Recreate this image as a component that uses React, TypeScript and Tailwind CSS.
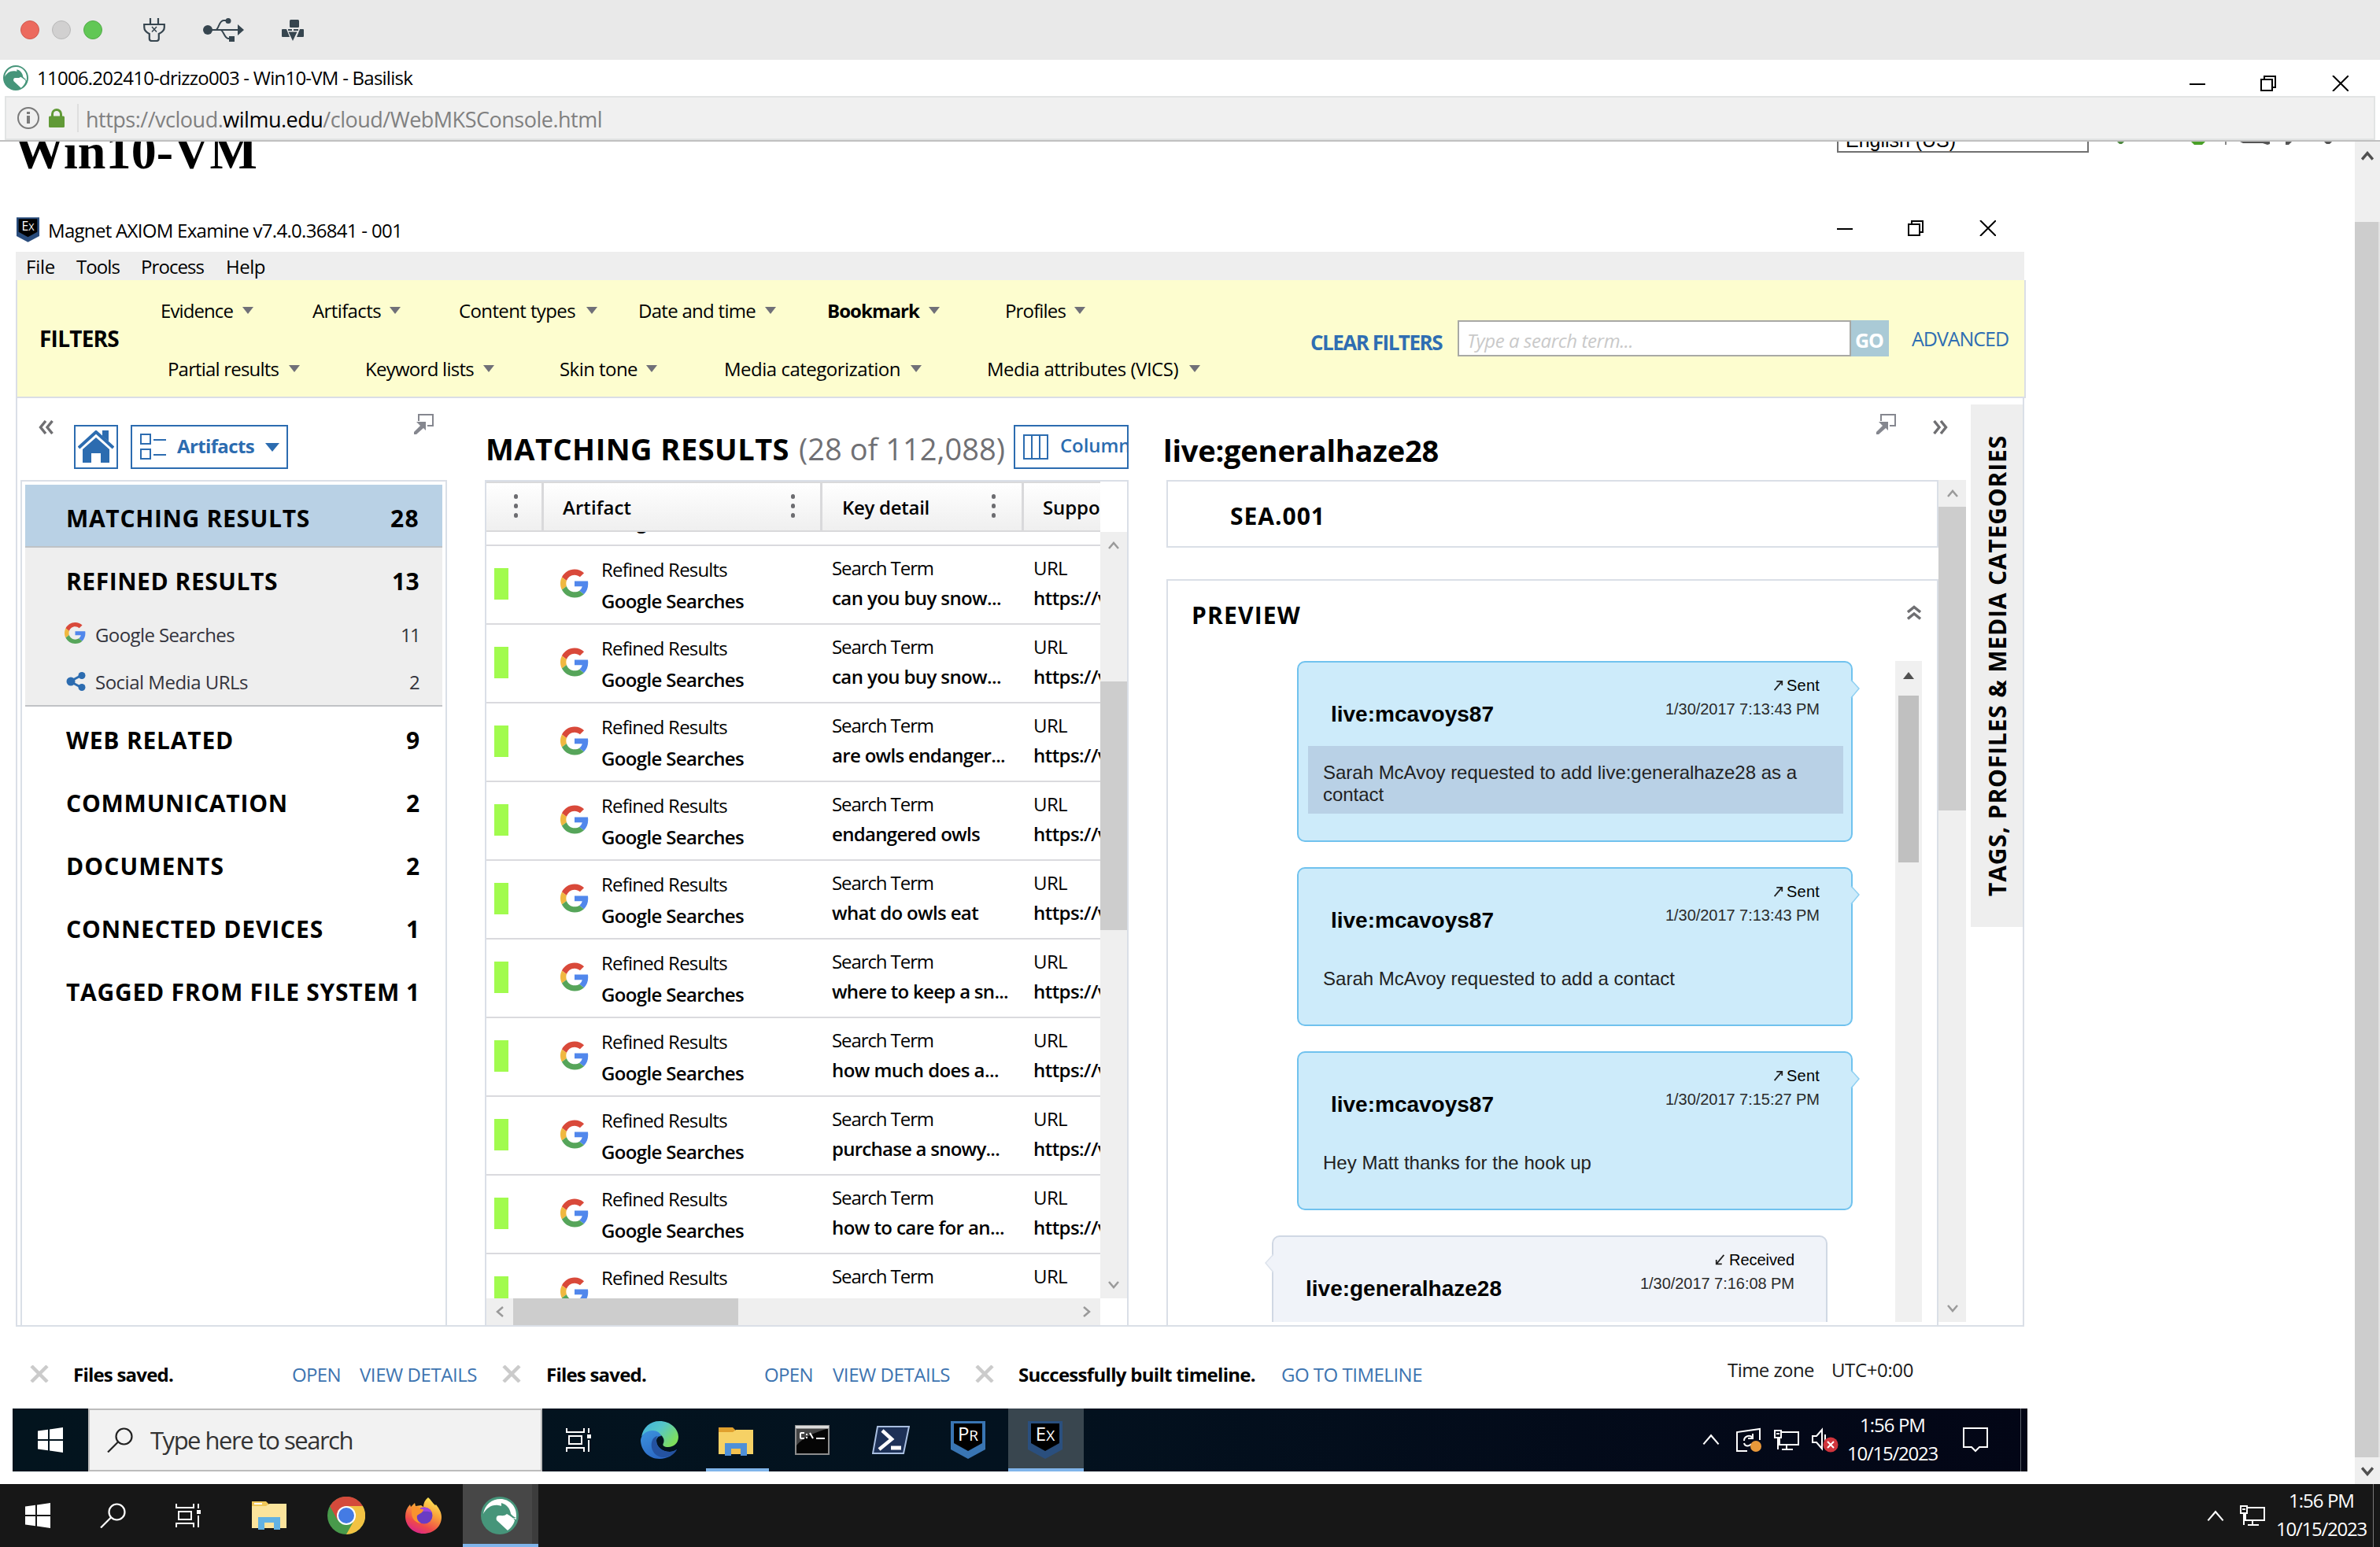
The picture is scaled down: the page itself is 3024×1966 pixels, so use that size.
import { useLayoutEffect, useRef, type ReactNode } from 'react';

type FitProps = { w: number; className?: string; vertical?: boolean; flat?: boolean; children: ReactNode };

/** A single line of text whose tracking is adjusted so that it measures exactly `w` pixels. */
function Fit({ w, className = '', vertical = false, flat = false, children }: FitProps) {
  const ref = useRef<HTMLSpanElement>(null);
  useLayoutEffect(() => {
    const el = ref.current;
    if (!el) return;
    el.style.letterSpacing = '0.01px';
    const box = el.getBoundingClientRect();
    const natural = vertical ? box.height : box.width;
    const count = (el.textContent ?? '').length || 1;
    el.style.letterSpacing = `${(w - natural) / count + 0.01}px`;
  }, [w, vertical]);
  return (
    <span ref={ref} className={`inline-block shrink-0 whitespace-pre ${flat ? '' : '-translate-x-px translate-y-px'} ${className}`}>
      {children}
    </span>
  );
}

/* ---------- icons ---------- */

const GoogleG = ({ className = '' }: { className?: string }) => (
  <svg viewBox="0 0 48 48" className={`shrink-0 ${className}`}>
    <path fill="#d9493a" d="M24 9.5c3.54 0 6.71 1.22 9.21 3.6l6.85-6.85C35.9 2.38 30.47 0 24 0 14.62 0 6.51 5.38 2.56 13.22l7.98 6.19C12.43 13.72 17.74 9.5 24 9.5z" />
    <path fill="#5187ec" d="M46.98 24.55c0-1.57-.15-3.09-.38-4.55H24v9.02h12.94c-.58 2.96-2.26 5.48-4.78 7.18l7.73 6c4.51-4.18 7.09-10.36 7.09-17.65z" />
    <path fill="#f0b840" d="M10.53 28.59c-.48-1.45-.76-2.99-.76-4.59s.27-3.14.76-4.59l-7.98-6.19C.92 16.46 0 20.12 0 24c0 3.88.92 7.54 2.56 10.78l7.97-6.19z" />
    <path fill="#56a55a" d="M24 48c6.48 0 11.93-2.13 15.89-5.81l-7.73-6c-2.15 1.45-4.92 2.3-8.16 2.3-6.26 0-11.57-4.22-13.47-9.91l-7.98 6.19C6.51 42.62 14.62 48 24 48z" />
  </svg>
);

const Basilisk = ({ className = '' }: { className?: string }) => (
  <svg viewBox="0 0 48 48" className={`shrink-0 ${className}`}>
    <circle cx="24" cy="24" r="24" fill="#46957a" />
    <path fill="#fff" d="M3 22C5 10 14 3 25 3c11 0 20 9 20 20v6c-3-1-6-2-8-5-3-7-7-12-15-13C13 10 7 15 3 22z" />
    <path fill="#46957a" d="M26 8c7 2 11 7 12 14 2 2 4 4 7 5-4 1-8-1-10-4-3 0-6-5-9-7z" />
    <path fill="#fff" d="M33 22c4 2 8 5 10 8-1 5-5 10-9 13L20 30c-1-3 0-6 3-6 4 0 7 1 10-2z" />
  </svg>
);

const WinLogo = () => (
  <svg viewBox="0 0 32 32" className="h-8 w-8 shrink-0" fill="#fff">
    <path d="M0 4.5 13 2.7V15H0zM15 2.4 32 0v15H15zM0 17h13v12.3L0 27.5zM15 17h17v15l-17-2.4z" />
  </svg>
);

const SearchIcon = ({ stroke }: { stroke: string }) => (
  <svg viewBox="0 0 33 32" className="h-8 w-[33px] shrink-0" fill="none" stroke={stroke} strokeWidth="2.2">
    <circle cx="21.5" cy="11.5" r="10" />
    <path d="M14 18.5 1 31.5" />
  </svg>
);

const TaskView = () => (
  <svg viewBox="0 0 33 32" className="h-8 w-[33px] shrink-0" fill="none" stroke="#fff" strokeWidth="2">
    <path d="M1 1v5h22V1M1 31v-5h22v5M29 1v6M29 16v15" />
    <rect x="4" y="11" width="16" height="10" />
    <rect x="27" y="9" width="5" height="5" fill="#fff" stroke="none" />
  </svg>
);

const Folder = ({ pale }: { pale?: boolean }) => (
  <svg viewBox="0 0 44 36" className="h-9 w-11 shrink-0">
    <path fill={pale ? '#f0c758' : '#e0a02d'} d="M0 0h18l3 3v6H0z" />
    {pale && <path fill="#fff" d="M3 2h10v2H3z" />}
    <path fill={pale ? '#fbe49c' : '#f6d165'} d="M0 6h18l4-3h22v31H0z" />
    <path fill={pale ? '#62b2e3' : '#4f90d8'} d="M8 20h28v16h-8v-9H16v9H8z" />
    <path fill={pale ? '#fbe49c' : '#f3c14f'} d="M16 27h12v7H16z" />
  </svg>
);

const Edge = () => (
  <svg viewBox="0 0 48 48" className="h-12 w-12 shrink-0">
    <defs>
      <linearGradient id="edgeTop" x1="0" y1="0" x2="1" y2="0.6">
        <stop offset="0" stopColor="#3fb0e0" />
        <stop offset="0.5" stopColor="#56c6c8" />
        <stop offset="1" stopColor="#7ede5c" />
      </linearGradient>
      <linearGradient id="edgeLow" x1="0" y1="0" x2="0.6" y2="1">
        <stop offset="0" stopColor="#3c93dd" />
        <stop offset="1" stopColor="#2a66c4" />
      </linearGradient>
    </defs>
    <path fill="url(#edgeTop)" d="M1 20C3 8 12 0 24 0c14 0 24 10 24 20 0 8-6 13-13 13-5 0-8-2-6-5 2-5-1-10-7-12C13 12 5 14 1 20z" />
    <path fill="url(#edgeLow)" d="M0 24c1-7 7-12 15-12 6 0 10 3 11 7-4 0-6 3-6 6 0 8 8 14 17 14 3 0 6-1 9-3-4 7-12 12-22 12C10 48 0 37 0 24z" />
    <path fill="#2452a0" d="M14 27c1-5 4-8 9-8-4 1-3 5-3 6 0 8 8 14 17 14 3 0 6-1 9-3-4 7-10 10-17 10-9 0-17-8-15-19z" />
  </svg>
);

const Cmd = () => (
  <svg viewBox="0 0 44 38" className="h-[38px] w-11 shrink-0">
    <rect width="44" height="38" fill="#8d8d8d" />
    <rect x="1" y="1" width="42" height="3" fill="#dcdcdc" />
    <rect x="2" y="5" width="40" height="31" fill="#050505" />
    <path d="M2 5h38C28 9 12 14 2 26z" fill="#444" />
    <path d="M12 10H8q-1 0-1 1v5q0 1 1 1h4M15 11v2M15 15v2M19 10l4 7M27 17h11" stroke="#fff" strokeWidth="2" fill="none" />
  </svg>
);

const PowerShell = () => (
  <svg viewBox="0 0 48 36" className="h-9 w-12 shrink-0">
    <path d="M7 1h40l-7 34H1z" fill="#1d3157" stroke="#a9bfe0" strokeWidth="2" />
    <path d="m13 6 12 11L9 30" fill="none" stroke="#fff" strokeWidth="4.5" />
    <path d="M24 28h13" stroke="#fff" strokeWidth="5" />
  </svg>
);

const Shield = ({ text, edge, className }: { text: string; edge: string; className: string }) => (
  <svg viewBox="0 0 44 48" className={`shrink-0 ${className}`}>
    <path d="M0 0h44v36L22 48 0 36z" fill={edge} />
    <path d="M4 3h36v25L22 38 4 28z" fill="#000" />
    <text x="22" y="25" textAnchor="middle" fontFamily="Open Sans, sans-serif" fontWeight="500" fontSize="24" fill="#fff">
      {text[0]}
      <tspan fontSize="19">{text[1]}</tspan>
    </text>
  </svg>
);

const Chrome = () => (
  <svg viewBox="0 0 48 48" className="h-12 w-12 shrink-0">
    <circle cx="24" cy="24" r="24" fill="#489a4b" />
    <path d="M24 12h21A24 24 0 0 1 24 48l10-18z" fill="#f2c243" />
    <path d="M3.2 12A24 24 0 0 1 45 12H24L13 30z" fill="#d44a3b" />
    <circle cx="24" cy="24" r="12" fill="#fff" />
    <circle cx="24" cy="24" r="10" fill="#447be4" />
  </svg>
);

const Firefox = () => (
  <svg viewBox="0 0 46 46" className="h-[46px] w-[46px] shrink-0">
    <defs>
      <linearGradient id="fox" x1="0.8" y1="0" x2="0.3" y2="1">
        <stop offset="0" stopColor="#fdf05a" />
        <stop offset="0.4" stopColor="#f9a13a" />
        <stop offset="0.75" stopColor="#ef4a4a" />
        <stop offset="1" stopColor="#d8248c" />
      </linearGradient>
    </defs>
    <path fill="url(#fox)" d="M29 0c4 3 5 7 9 10l1-1c4 5 7 10 7 16 0 12-10 21-23 21S0 36 0 24c0-6 2-11 6-15l1 3 5-5 1 4 7-1 3 2c0-5 2-9 6-12z" />
    <circle cx="24" cy="23" r="10.5" fill="#6a3cc4" />
    <path fill="#a046e0" d="M20 13c6-2 12 1 14 7-4-3-9-2-14-2z" />
    <path fill="#f9932f" d="M8 12c5-2 9 0 12 3h3c0 4-4 5-8 8-1 5 2 8 5 10-8-1-12-7-12-13z" />
  </svg>
);

const PinOut = ({ className = '' }: { className?: string }) => (
  <svg viewBox="0 0 27 26" className={`h-[26px] w-[27px] shrink-0 ${className}`}>
    <path d="M7 9V1h18v14h-7" fill="none" stroke="#85878f" strokeWidth="2" />
    <path d="M4 10h12v11l-3-3-9 8H1v-3l8-8z" fill="#85878f" />
  </svg>
);

const DoubleChevron = ({ className = '' }: { className?: string }) => (
  <svg viewBox="0 0 20 18" className={`h-[18px] w-5 shrink-0 ${className}`} fill="none" stroke="#6f6f72" strokeWidth="3.400">
    <path d="M9 1 2.500 9 9 17M17.500 1 11 9l6.500 8" />
  </svg>
);

const Chevron = ({ className = '', color = '#9a9a9a', width = 2.5 }: { className?: string; color?: string; width?: number }) => (
  <svg viewBox="0 0 14 10" className={`shrink-0 ${className}`} fill="none" stroke={color} strokeWidth={width}>
    <path d="m1 9 6-7 6 7" />
  </svg>
);

const Caret = ({ className = '' }: { className?: string }) => (
  <svg viewBox="0 0 14 9" className={`h-[9px] w-3.5 shrink-0 ${className}`}>
    <path d="M0 0h14L7 9z" fill="#707078" />
  </svg>
);

const WindowButtons = ({ className = '' }: { className?: string }) => (
  <svg viewBox="0 0 202 20" className={`h-5 w-[202px] shrink-0 ${className}`} fill="none" stroke="#000" strokeWidth="2">
    <path d="M0 11h20M95 5V1h14v14h-4M182 0l20 20M202 0l-20 20" />
    <path d="M91 5h14v14H91z" />
  </svg>
);

const NetIcon = () => (
  <svg viewBox="0 0 32 27" className="h-[27px] w-8 shrink-0" fill="none" stroke="#fff" strokeWidth="2">
    <path d="M10 3h21v16H7V11M16 19v6M10 25h14M1 1h8v9H1zM3 5h4M5 10v15" />
  </svg>
);

const CloseX = ({ className = '' }: { className?: string }) => (
  <svg viewBox="0 0 24 22" className={`h-[22px] w-6 shrink-0 ${className}`} stroke="#cbcbcb" strokeWidth="4.500">
    <path d="M2 1l20 20M22 1 2 21" />
  </svg>
);

/* ---------- host window chrome ---------- */

function MacBar() {
  return (
    <div className="flex h-[76px] shrink-0 items-center bg-[#e9e9e9] pl-[26px]">
      <div className="flex gap-4">
        <span className="h-6 w-6 rounded-full border border-[#d05a4f] bg-[#ec6a5e]" />
        <span className="h-6 w-6 rounded-full border border-[#b8b8b8] bg-[#d1d0d0]" />
        <span className="h-6 w-6 rounded-full border border-[#53ab49] bg-[#61c755]" />
      </div>
      <svg viewBox="0 0 28 30" className="ml-[52px] h-[30px] w-7" fill="none" stroke="#36454f" strokeWidth="2.200">
        <path d="M9 0v8M19 0v8M1.200 8h25.600v4c0 4-3 6-7 8v6c0 2-1 3-3 3h-6c-2 0-3-1-3-3v-6c-4-2-6.500-4-6.500-8z" />
        <path d="m11 11 6 6.500M17 11l-6 6.500" strokeWidth="1.500" />
      </svg>
      <svg viewBox="0 0 52 30" className="ml-12 h-[30px] w-[52px]">
        <path d="M6 15h40M16 15c4 0 4-12 10-12h5M22 15c4 0 5 11 10 11h4" fill="none" stroke="#36454f" strokeWidth="2" />
        <circle cx="6" cy="15" r="6" fill="#36454f" />
        <circle cx="32" cy="3.500" r="3.500" fill="#36454f" />
        <path d="M33 23h7v7h-7zM44 8l8 7-8 7z" fill="#36454f" />
      </svg>
      <svg viewBox="0 0 28 27" className="ml-12 h-[27px] w-7" fill="#36454f">
        <rect x="10" y="0" width="12" height="10" rx="1.500" />
        <path d="M1 12h5l4 10H1q-1 0-1-1v-8q0-1 1-1zM27 12h-4l-4 10h8q1 0 1-1v-8q0-1-1-1z" />
        <path d="M8.500 15.500h11L14 27zM8 12h5v2H8zM15 12h6v2h-6z" />
      </svg>
    </div>
  );
}

function BrowserHead() {
  return (
    <>
      <div className="flex h-[46px] shrink-0 items-center bg-white pl-1">
        <Basilisk className="h-8 w-8" />
        <Fit flat w={477} className="ml-[11px]">11006.202410-drizzo003 - Win10-VM - Basilisk</Fit>
        <div className="flex-1" />
        <WindowButtons className="mr-10 mt-[13px]" />
      </div>
      <div className="flex h-[58px] shrink-0 border-b-2 border-[#c0c0c0] pl-1.5">
        <div className="mr-1.5 flex flex-1 items-center border-2 border-[#e2e4e4] bg-[#f0f0f0] pl-[14px]">
          <svg viewBox="0 0 28 28" className="h-7 w-7" fill="none" stroke="#7a7a7a" strokeWidth="2">
            <circle cx="14" cy="14" r="13" />
            <path d="M14 6v3M14 11v10" strokeWidth="4" />
          </svg>
          <svg viewBox="0 0 20 24" className="ml-3 h-6 w-5">
            <path d="M4.500 11V7a5.500 5.500 0 0 1 11 0v4" fill="none" stroke="#619a37" strokeWidth="3" />
            <rect y="9.500" width="20" height="14.500" rx="1.500" fill="#619a37" />
          </svg>
          <span className="ml-4 h-9 w-0.5 bg-[#dedede]" />
          <Fit flat w={656} className="ml-[9px] mt-1 text-[27px] leading-9 text-[#808080]">
            https://vcloud.<span className="text-black">wilmu.edu</span>/cloud/WebMKSConsole.html
          </Fit>
        </div>
      </div>
    </>
  );
}

function PageTop() {
  return (
    <div className="flex h-[84px] shrink-0 items-start overflow-hidden">
      <h1 className="-mt-5 ml-[19px] w-[2315px] shrink-0 font-['Liberation_Serif',serif] text-[64px] font-bold leading-[64px]">
        <Fit w={309}>Win10-VM</Fit>
      </h1>
      <div className="-mt-[22px] flex h-9 w-[320px] shrink-0 items-center border-2 border-[#707070] pl-2.5">
        <Fit w={140} className="mt-1 font-['Liberation_Sans',sans-serif] text-[25px]">English (US)</Fit>
      </div>
      <svg viewBox="0 0 280 6" className="ml-9 h-1.5 w-[280px]">
        <path d="M0 0h9l-3 3H3z" fill="#4f8a42" />
        <path d="M94 0h18l-4 4h-10z" fill="#4aa028" />
        <path d="M137 0h2v4h-2z" fill="#888" />
        <path d="M156 0h38v3l-3 1-6-2h-25zM214 0h8l-4 4h-4zM263 0h10l-3 3h-4z" fill="#555" />
      </svg>
    </div>
  );
}

/* ---------- filters ---------- */

type Filter = { label: string; w: number; ml: string; gap: string; bold?: boolean };

const filterRows: Filter[][] = [
  [
    { label: 'Evidence', w: 92, ml: 'ml-[53px]', gap: 'ml-[11px]' },
    { label: 'Artifacts', w: 87, ml: 'ml-[76px]', gap: 'ml-[10px]' },
    { label: 'Content types', w: 148, ml: 'ml-[75px]', gap: 'ml-[13px]' },
    { label: 'Date and time', w: 149, ml: 'ml-[53px]', gap: 'ml-[11px]' },
    { label: 'Bookmark', w: 117, ml: 'ml-[66px]', gap: 'ml-[11px]', bold: true },
    { label: 'Profiles', w: 77, ml: 'ml-[84px]', gap: 'ml-[10px]' },
  ],
  [
    { label: 'Partial results', w: 141, ml: 'ml-[62px]', gap: 'ml-[12px]' },
    { label: 'Keyword lists', w: 138, ml: 'ml-[84px]', gap: 'ml-[11px]' },
    { label: 'Skin tone', w: 99, ml: 'ml-[84px]', gap: 'ml-[10px]' },
    { label: 'Media categorization', w: 224, ml: 'ml-[86px]', gap: 'ml-[12px]' },
    { label: 'Media attributes (VICS)', w: 243, ml: 'ml-[84px]', gap: 'ml-[13px]' },
  ],
];

function FilterBar() {
  return (
    <div className="flex h-[150px] w-[2554px] shrink-0 items-center border-x-2 border-b-2 border-[#dadee6] bg-[#fdfdcf]">
      <Fit w={101} className="ml-[29px] text-[28px] font-bold">FILTERS</Fit>
      <div className="w-[1514px] shrink-0">
        {filterRows.map((row, i) => (
          <div key={i} className="mt-0.5 flex h-[72px] items-center">
            {row.map((f) => (
              <div key={f.label} className={`flex items-center ${f.ml}`}>
                <Fit w={f.w} className={f.bold ? 'font-bold' : ''}>{f.label}</Fit>
                <Caret className={f.gap} />
              </div>
            ))}
          </div>
        ))}
      </div>
      <Fit w={167} className="mt-2 text-[26px] font-bold text-[#2f6eb2]">CLEAR FILTERS</Fit>
      <div className="ml-[19px] flex h-[46px] w-[500px] items-center border-2 border-[#a8a9a5] bg-white pl-[11px]">
        <Fit w={211} className="mt-1 italic text-[#c9c9c9]">Type a search term...</Fit>
      </div>
      <div className="flex h-[46px] w-12 items-center justify-center bg-[#aacad6]">
        <Fit w={36} className="mt-1 text-[25px] font-bold text-white">GO</Fit>
      </div>
      <Fit w={123} className="ml-[30px] text-[25px] text-[#2f6eb2]">ADVANCED</Fit>
    </div>
  );
}

/* ---------- left panel ---------- */

const groups = [
  { label: 'WEB RELATED', w: 213, count: '9', cw: 17 },
  { label: 'COMMUNICATION', w: 282, count: '2', cw: 17 },
  { label: 'DOCUMENTS', w: 201, count: '2', cw: 17 },
  { label: 'CONNECTED DEVICES', w: 327, count: '1', cw: 17 },
  { label: 'TAGGED FROM FILE SYSTEM', w: 424, count: '1', cw: 17 },
];

function ArtifactsPanel() {
  return (
    <div className="ml-1 flex w-[542px] shrink-0 flex-col">
      <div className="flex h-[104px] shrink-0 items-start">
        <DoubleChevron className="ml-[23px] mt-[28px]" />
        <div className="ml-[25px] mt-[34px] flex h-14 w-14 items-center justify-center border-2 border-[#2c6cb0]">
          <svg viewBox="0 0 46 42" className="h-[42px] w-[46px]">
            <path d="M1 22 23 2l22 20" fill="none" stroke="#2c6cb0" strokeWidth="4" />
            <path d="M31 0h8v14l-8-7zM23 9 40 24v17H29V29H17v12H6V24z" fill="#2c6cb0" />
          </svg>
        </div>
        <div className="ml-4 mt-[34px] flex h-14 w-[200px] items-center border-2 border-[#2c6cb0] pl-2.5">
          <svg viewBox="0 0 33 34" className="h-[34px] w-[33px]" fill="none" stroke="#2c6cb0" strokeWidth="2">
            <path d="M1 1h12v12H1zM1 20h12v12H1zM17 8h16M17 27h16" />
          </svg>
          <Fit w={98} className="mb-1 ml-[15px] font-bold text-[#2c6cb0]">Artifacts</Fit>
          <svg viewBox="0 0 18 11" className="ml-[13px] h-[11px] w-[18px]"><path d="M0 0h18L9 11z" fill="#2c6cb0" /></svg>
        </div>
        <PinOut className="ml-[159px] mt-5" />
      </div>
      <div className="flex-1 border-x-2 border-t-2 border-[#dadfe7] px-1 pt-1 text-[30px] font-bold">
        <div className="flex h-20 items-center justify-between border-b-2 border-[#bfc2c6] bg-[#b9d1e5] pl-[53px] pr-[28px] pt-1.5">
          <Fit w={310}>MATCHING RESULTS</Fit>
          <Fit w={37}>28</Fit>
        </div>
        <div className="h-[202px] border-b-2 border-[#c0c2c6] bg-[#eeeeee]">
          <div className="flex h-[84px] items-center justify-between pl-[53px] pr-[28px]">
            <Fit w={269}>REFINED RESULTS</Fit>
            <Fit w={35}>13</Fit>
          </div>
          <div className="flex h-[52px] items-center pl-[50px] pr-[28px] text-2xl font-normal text-[#33333c]">
            <GoogleG className="mb-1 h-[29px] w-[27px]" />
            <Fit w={177} className="ml-[13px]">Google Searches</Fit>
            <span className="flex-1" />
            <Fit w={24}>11</Fit>
          </div>
          <div className="flex h-16 items-center pl-[52px] pr-[28px] pt-1 text-2xl font-normal text-[#33333c]">
            <svg viewBox="0 0 25 24" className="h-6 w-[25px]" fill="#2c6cb0">
              <path d="M5 12 20 4M5 12l15 8" stroke="#2c6cb0" strokeWidth="3" />
              <circle cx="6" cy="12" r="5.500" /><circle cx="20" cy="4.500" r="4.500" /><circle cx="20" cy="19.500" r="4.500" />
            </svg>
            <Fit w={194} className="ml-[13px]">Social Media URLs</Fit>
            <span className="flex-1" />
            <Fit w={13}>2</Fit>
          </div>
        </div>
        <div className="mt-0.5">
          {groups.map((g) => (
            <div key={g.label} className="flex h-20 items-center justify-between pl-[53px] pr-[28px]">
              <Fit w={g.w}>{g.label}</Fit>
              <Fit w={g.cw}>{g.count}</Fit>
            </div>
          ))}
        </div>
      </div>
    </div>
  );
}

/* ---------- results table ---------- */

const terms = [
  { t: 'can you buy snow...', w: 215 },
  { t: 'can you buy snow...', w: 215 },
  { t: 'are owls endanger...', w: 220 },
  { t: 'endangered owls', w: 188 },
  { t: 'what do owls eat', w: 186 },
  { t: 'where to keep a sn...', w: 224 },
  { t: 'how much does a...', w: 212 },
  { t: 'purchase a snowy...', w: 213 },
  { t: 'how to care for an...', w: 219 },
  { t: '', w: 0 },
];

const Dots = () => (
  <div className="mb-0.5 flex flex-col gap-1.5">
    <span className="h-1.5 w-[5px] rounded-full bg-[#6c6c70]" />
    <span className="h-1.5 w-[5px] rounded-full bg-[#6c6c70]" />
    <span className="h-1.5 w-[5px] rounded-full bg-[#6c6c70]" />
  </div>
);

function ResultsTable() {
  return (
    <div className="ml-12 flex w-[818px] shrink-0 flex-col">
      <div className="flex h-[104px] shrink-0 items-center pt-5">
        <Fit w={386} className="ml-[2px] mt-0.5 text-[38px] font-bold">MATCHING RESULTS</Fit>
        <Fit w={262} className="ml-3 mt-0.5 text-[38px] text-[#707074]">(28 of 112,088)</Fit>
        <div className="ml-2.5 flex h-14 w-[146px] shrink-0 items-center overflow-hidden border-2 border-[#2c6cb0] pl-2.5">
          <svg viewBox="0 0 32 32" className="h-8 w-8 shrink-0" fill="none" stroke="#2c6cb0" strokeWidth="2">
            <path d="M1 1h30v30H1zM11 1v30M21 1v30" />
          </svg>
          <Fit w={101} className="mb-1.5 ml-4 font-semibold text-[#2c6cb0]">Columns</Fit>
        </div>
      </div>
      <div className="flex min-h-0 flex-1 flex-col border-x-2 border-t-2 border-[#dadfe7]">
        <div className="flex h-16 shrink-0">
          <div className="flex w-[780px] overflow-hidden border-b-2 border-t-2 border-[#d9d9db] bg-linear-to-b from-white to-[#efefef] font-semibold">
            <div className="flex w-[73px] shrink-0 items-center justify-center border-r-[3px] border-[#d9d9db] pl-1"><Dots /></div>
            <div className="flex w-[354px] shrink-0 items-center justify-between border-r-[3px] border-[#d9d9db] pl-[25px] pr-[32px]">
              <Fit w={87}>Artifact</Fit><Dots />
            </div>
            <div className="flex w-[256px] shrink-0 items-center justify-between border-r-[3px] border-[#d9d9db] pl-[26px] pr-[33px]">
              <Fit w={111}>Key detail</Fit><Dots />
            </div>
            <div className="flex shrink-0 items-center pl-[25px]"><Fit w={127}>Supporting</Fit></div>
          </div>
        </div>
        <div className="flex h-[974px] shrink-0">
          <div className="w-[780px] overflow-hidden">
            <div className="flex h-[18px] items-start overflow-hidden border-b-2 border-[#dadade] pl-[147px]">
              <Fit w={181} className="-mt-[34px] font-semibold leading-10">Google Searches</Fit>
            </div>
            {terms.map((row, i) => (
              <div key={i} className="flex h-[100px] items-center border-b-2 border-[#dadade]">
                <span className="mb-0.5 ml-2.5 h-10 w-[18px] shrink-0 bg-[#a1fb4e]" />
                <GoogleG className="mb-[3px] ml-[66px] h-[37px] w-9" />
                <div className="ml-[17px] flex w-[293px] shrink-0 flex-col items-start leading-10">
                  <Fit w={160}>Refined Results</Fit>
                  <Fit w={181} className="font-semibold">Google Searches</Fit>
                </div>
                <div className="mb-1.5 flex w-64 shrink-0 flex-col items-start leading-[38px]">
                  <Fit w={129}>Search Term</Fit>
                  {row.t ? <Fit w={row.w} className="font-semibold">{row.t}</Fit> : <span className="h-[38px]" />}
                </div>
                <div className="mb-1.5 flex shrink-0 flex-col items-start leading-[38px]">
                  <Fit w={43}>URL</Fit>
                  {row.t ? <Fit w={94} className="font-semibold">https://v</Fit> : <span className="h-[38px]" />}
                </div>
              </div>
            ))}
          </div>
          <div className="flex w-[34px] flex-col items-center bg-[#efefef]">
            <Chevron className="mt-3 h-2.5 w-3.5" />
            <span className="mt-[168px] h-[316px] w-full bg-[#cdcdcd]" />
            <span className="flex-1" />
            <Chevron className="mb-3 h-2.5 w-3.5 rotate-180" />
          </div>
        </div>
        <div className="flex h-[34px] w-[780px] items-center bg-[#efefef]">
          <Chevron className="ml-2.5 h-2.5 w-3.5 -rotate-90" />
          <span className="ml-2.5 h-full w-[286px] bg-[#cdcdcd]" />
          <span className="flex-1" />
          <Chevron className="mr-2.5 h-2.5 w-3.5 rotate-90" />
        </div>
      </div>
    </div>
  );
}

/* ---------- preview panel ---------- */

type Message = { from: string; fw: number; when: string; lines: string[]; lw: number[]; received?: boolean; marked?: boolean };

const messages: Message[] = [
  { from: 'live:mcavoys87', fw: 207, when: '1/30/2017 7:13:43 PM', lines: ['Sarah McAvoy requested to add live:generalhaze28 as a', 'contact'], lw: [602, 77], marked: true },
  { from: 'live:mcavoys87', fw: 207, when: '1/30/2017 7:13:43 PM', lines: ['Sarah McAvoy requested to add a contact'], lw: [447] },
  { from: 'live:mcavoys87', fw: 207, when: '1/30/2017 7:15:27 PM', lines: ['Hey Matt thanks for the hook up'], lw: [341] },
  { from: 'live:generalhaze28', fw: 249, when: '1/30/2017 7:16:08 PM', lines: [], lw: [], received: true },
];

function Bubble({ m }: { m: Message }) {
  const tone = m.received ? 'ml-[132px] h-[202px] border-[#d0d8e4] bg-[#f0f3f9]' : 'ml-[164px] border-[#70c2ee] bg-[#cdebfa]';
  return (
    <div className={`relative w-[706px] shrink-0 rounded-[10px] border-2 pb-[34px] ${tone}`}>
      <svg
        viewBox="0 0 12 24"
        className={m.received ? 'absolute -left-[11px] top-[22px] h-6 w-3 -scale-x-100' : 'absolute -right-[11px] top-[22px] h-6 w-3'}
      >
        <path d="M0 0 11 11 0 23z" fill={m.received ? '#f0f3f9' : '#cdebfa'} />
        <path d="M1 0 11 11 1 23" fill="none" stroke={m.received ? '#dde3ec' : '#8fd0f2'} strokeWidth="1.500" />
      </svg>
      <div className="flex justify-between pl-[42px] pr-10 pt-3.5">
        <Fit w={m.fw} className="mt-9 text-[28px] font-bold leading-[30px]">{m.from}</Fit>
        <div className="flex flex-col items-end text-xl leading-[30px]">
          <div className="flex items-center">
            <svg viewBox="0 0 14 16" className={`mr-1 h-3.5 w-3.5 ${m.received ? 'rotate-180' : ''}`} fill="none" stroke="#222" strokeWidth="2">
              <path d="m2 15 10-12M5 2h8v6" />
            </svg>
            <Fit flat w={m.received ? 83 : 42}>{m.received ? 'Received' : 'Sent'}</Fit>
          </div>
          <Fit flat w={196} className="text-[#2b2b2b]">{m.when}</Fit>
        </div>
      </div>
      {m.lines.length > 0 && (
        <div className={`ml-3 mt-[26px] flex w-[680px] flex-col items-start pb-2.5 pl-[19px] pt-5 leading-7 text-[#222] ${m.marked ? 'bg-[#b9d1e6]' : ''}`}>
          {m.lines.map((line, i) => (
            <Fit flat key={line} w={m.lw[i]}>{line}</Fit>
          ))}
        </div>
      )}
    </div>
  );
}

function DetailsPanel() {
  return (
    <div className="flex w-[1064px] shrink-0 flex-col">
      <div className="flex h-[104px] shrink-0 items-start">
        <Fit w={350} className="ml-[45px] mt-[45px] text-[38px] font-bold leading-10">live:generalhaze28</Fit>
        <PinOut className="ml-[554px] mt-5" />
        <DoubleChevron className="ml-[45px] mt-[28px] rotate-180" />
      </div>
      <div className="flex min-h-0 flex-1 pl-12">
        <div className="flex w-[981px] shrink-0 flex-col">
          <div className="flex h-[86px] shrink-0 items-center border-2 border-[#dadfe7] pl-[80px] pt-1">
            <Fit w={121} className="text-[30px] font-bold">SEA.001</Fit>
          </div>
          <div className="mt-10 flex min-h-0 flex-1 flex-col border-x-2 border-t-2 border-[#dadfe7]">
            <div className="flex h-[102px] shrink-0 items-center justify-between pb-4 pl-[31px] pr-[19px]">
              <Fit w={139} className="text-[30px] font-bold">PREVIEW</Fit>
              <DoubleChevron className="mb-1 rotate-90" />
            </div>
            <div className="flex h-[840px] shrink-0 overflow-hidden font-['Liberation_Sans',sans-serif]">
              <div className="flex w-[924px] shrink-0 flex-col gap-8">
                {messages.map((m, i) => <Bubble key={i} m={m} />)}
              </div>
              <div className="flex h-full w-[34px] flex-col items-center bg-[#f0f0f0]">
                <svg viewBox="0 0 14 9" className="mt-3.5 h-[9px] w-3.5"><path d="M7 0 14 9H0z" fill="#505050" /></svg>
                <span className="mt-[21px] h-[212px] w-[26px] bg-[#c0c0c0]" />
              </div>
            </div>
          </div>
        </div>
        <div className="flex h-[1070px] w-[35px] flex-col items-center bg-[#efefef]">
          <Chevron className="mt-3 h-2.5 w-3.5" />
          <span className="mt-3 h-[386px] w-full bg-[#cdcdcd]" />
          <span className="flex-1" />
          <Chevron className="mb-3 h-2.5 w-3.5 rotate-180" />
        </div>
      </div>
    </div>
  );
}

/* ---------- status bar and taskbars ---------- */

function StatusBar() {
  return (
    <div className="flex h-[104px] shrink-0 items-center pl-[38px] pt-4">
      <CloseX />
      <Fit w={127} className="ml-8 font-bold">Files saved.</Fit>
      <Fit w={62} className="ml-[151px] text-[#3d74b0]">OPEN</Fit>
      <Fit w={149} className="ml-[24px] text-[#3d74b0]">VIEW DETAILS</Fit>
      <CloseX className="ml-[31px]" />
      <Fit w={127} className="ml-[33px] font-bold">Files saved.</Fit>
      <Fit w={62} className="ml-[150px] text-[#3d74b0]">OPEN</Fit>
      <Fit w={149} className="ml-[25px] text-[#3d74b0]">VIEW DETAILS</Fit>
      <CloseX className="ml-[31px]" />
      <Fit w={301} className="ml-[32px] font-bold">Successfully built timeline.</Fit>
      <Fit w={179} className="ml-[33px] text-[#3d74b0]">GO TO TIMELINE</Fit>
      <Fit w={110} className="mb-3 ml-[388px] text-[#1a1a1a]">Time zone</Fit>
      <Fit w={104} className="mb-3 ml-[22px] text-[#1a1a1a]">UTC+0:00</Fit>
    </div>
  );
}

const Clock = ({ className = '' }: { className?: string }) => (
  <div className={`flex flex-col items-center leading-9 text-white ${className}`}>
    <Fit w={83}>1:56 PM</Fit>
    <Fit w={115}>10/15/2023</Fit>
  </div>
);

function GuestTaskbar() {
  return (
    <div className="ml-4 flex h-20 w-[2560px] shrink-0 items-center bg-linear-to-r from-[#03141e] via-[#03121f] to-[#030616]">
      <div className="ml-8"><WinLogo /></div>
      <div className="ml-8 flex h-20 w-[577px] shrink-0 items-center border-2 border-[#bcbcbc] bg-[#f2f2f2] pl-[22px]">
        <SearchIcon stroke="#222" />
        <Fit w={257} className="ml-[23px] text-[31px] text-[#333]">Type here to search</Fit>
      </div>
      <div className="ml-[30px]"><TaskView /></div>
      <div className="ml-[62px]"><Edge /></div>
      <div className="ml-[35px] flex h-20 w-20 flex-col items-center justify-end">
        <span className="mb-4 mr-1 h-9"><Folder /></span>
        <span className="h-1 w-20 bg-[#7fb4ea]" />
      </div>
      <div className="ml-[33px]"><Cmd /></div>
      <div className="ml-[54px]"><PowerShell /></div>
      <div className="ml-[52px]"><Shield text="PR" edge="#3975b3" className="h-12 w-[44px]" /></div>
      <div className="ml-[29px] flex h-20 w-24 flex-col items-center justify-end bg-[#39464f]">
        <span className="mb-3 mr-0.5 h-12"><Shield text="EX" edge="#2a4f7e" className="h-12 w-[44px]" /></span>
        <span className="h-1 w-full bg-[#7fb4ea]" />
      </div>
      <div className="flex-1" />
      <Chevron className="mb-0.5 h-4 w-6" color="#fff" width={1.3} />
      <svg viewBox="0 0 34 32" className="ml-[20px] h-8 w-[34px]" fill="none">
        <path d="M14 30H1V6l29-4v14" stroke="#fff" strokeWidth="2" />
        <path d="M10 17c0-6 7-8 11-4m0-5v6h-6M19 21c-3 4-8 3-9-1" stroke="#fff" strokeWidth="2" />
        <circle cx="25" cy="24" r="7" fill="#e8983a" />
      </svg>
      <div className="ml-3.5"><NetIcon /></div>
      <svg viewBox="0 0 34 32" className="ml-4 h-8 w-[34px]" fill="none">
        <path d="M1 11h5l7-8v24l-7-8H1zM17 9v8" stroke="#fff" strokeWidth="2" />
        <circle cx="24" cy="22" r="9.500" fill="#d0343c" />
        <path d="m20 18 8 8M28 18l-8 8" stroke="#fff" strokeWidth="2" />
      </svg>
      <Clock className="ml-3 mb-1" />
      <svg viewBox="0 0 32 32" className="ml-[31px] h-8 w-8" fill="none" stroke="#fff" strokeWidth="2">
        <path d="M1 1h30v24H21l-5 5-5-5H1z" />
      </svg>
      <span className="ml-[41px] mr-2 h-20 w-px bg-[#5a5f6a]" />
    </div>
  );
}

function HostTaskbar() {
  return (
    <div className="flex h-20 shrink-0 items-center bg-[#171717]">
      <div className="ml-8"><WinLogo /></div>
      <div className="ml-[63px]"><SearchIcon stroke="#fff" /></div>
      <div className="ml-[63px]"><TaskView /></div>
      <div className="ml-[64px]"><Folder pale /></div>
      <div className="ml-[52px]"><Chrome /></div>
      <div className="ml-[51px]"><Firefox /></div>
      <div className="ml-[27px] flex h-20 w-24 flex-col items-center justify-end border-r-8 border-[#3c3c3c] bg-[#474747]">
        <span className="mb-3 ml-1.5 h-12"><Basilisk className="h-12 w-12" /></span>
        <span className="-mr-2 h-1 w-24 bg-[#7fb4ea]" />
      </div>
      <div className="flex-1" />
      <Chevron className="h-4 w-6" color="#fff" width={1.3} />
      <div className="ml-[19px]"><NetIcon /></div>
      <Clock className="ml-[15px] mb-1" />
      <span className="ml-[7px] mr-2 h-20 w-px bg-[#777]" />
    </div>
  );
}

export default function App() {
  return (
    <div className="flex h-[1966px] w-[3024px] flex-col overflow-hidden bg-white font-['Open_Sans',sans-serif] text-2xl text-black">
      <MacBar />
      <BrowserHead />
      <div className="flex h-[1706px] shrink-0">
        <div className="flex w-[2992px] shrink-0 flex-col">
          <PageTop />
          <div className="flex h-14 w-[2576px] shrink-0 items-center pl-[21px]">
            <Shield text="EX" edge="#294c7c" className="h-8 w-[29px]" />
            <Fit w={450} className="ml-3">Magnet AXIOM Examine v7.4.0.36841 - 001</Fit>
            <div className="flex-1" />
            <WindowButtons className="mr-10 mb-1" />
          </div>
          <div className="ml-5 flex h-9 w-[2552px] shrink-0 items-center bg-[#eeeeee] pl-3.5">
            <Fit w={37}>File</Fit>
            <Fit w={55} className="ml-[27px]">Tools</Fit>
            <Fit w={80} className="ml-[27px]">Process</Fit>
            <Fit w={50} className="ml-[28px]">Help</Fit>
          </div>
          <div className="ml-5 flex shrink-0"><FilterBar /></div>
          <div className="ml-5 flex h-[1180px] w-[2552px] shrink-0 border-x-2 border-b-2 border-[#dadfe7]">
            <ArtifactsPanel />
            <ResultsTable />
            <DetailsPanel />
            <div className="ml-1.5 mt-2 flex h-[664px] w-[66px] shrink-0 items-center justify-center bg-[#eeeeee] pl-0.5">
              <Fit flat vertical w={586} className="rotate-180 text-[30px] font-bold leading-8 [writing-mode:vertical-rl]">
                TAGS, PROFILES &amp; MEDIA CATEGORIES
              </Fit>
            </div>
          </div>
          <StatusBar />
          <GuestTaskbar />
        </div>
        <div className="flex w-8 shrink-0 flex-col items-center bg-[#efefef]">
          <Chevron className="mt-3 h-3 w-4" color="#505050" width={3} />
          <span className="mt-[78px] h-[1570px] w-full border-r-2 border-[#e4e4e4] bg-[#cdcdcd]" />
          <Chevron className="mt-3 h-3 w-4 rotate-180" color="#505050" width={3} />
        </div>
      </div>
      <HostTaskbar />
    </div>
  );
}
